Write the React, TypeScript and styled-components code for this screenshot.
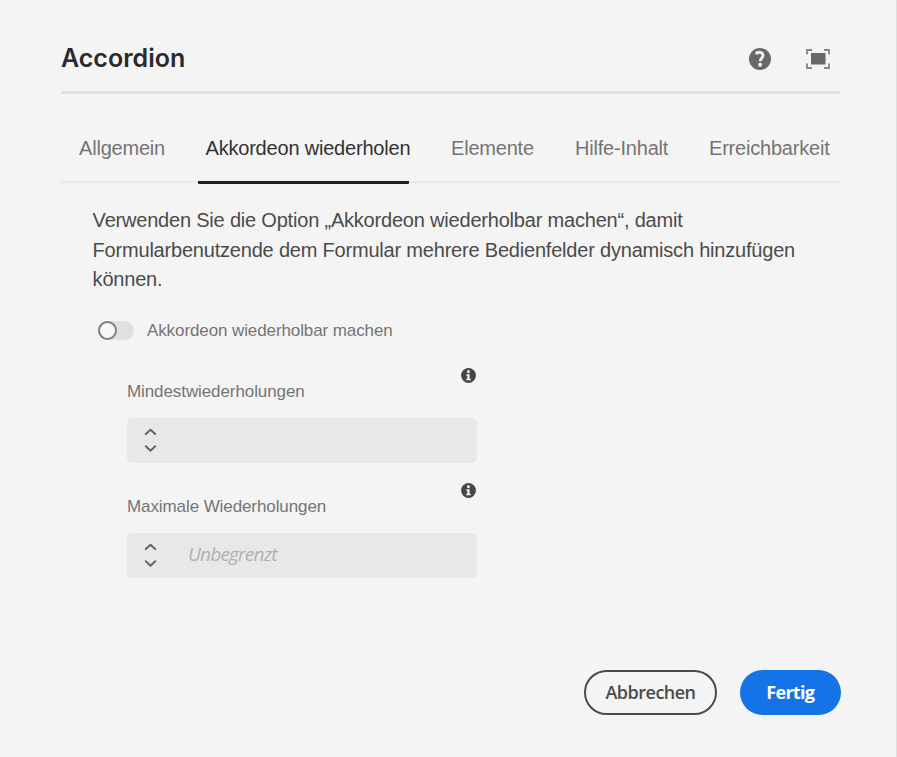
import React from 'react';
import styled, { createGlobalStyle } from 'styled-components';

const GlobalStyle = createGlobalStyle`
  * { box-sizing: border-box; }
  body { margin: 0; background: #f4f4f4; }
  button { margin: 0; padding: 0; background: none; border: 0; cursor: pointer; }
`;

const Dialog = styled.main`
  display: flex;
  flex-direction: column;
  width: 897px;
  height: 757px;
  padding: 31px 56px 42px 61px;
  border-right: 1px solid #dfdfdf;
  background: #f4f4f4;
  color: #4b4b4b;
  font-family: 'Liberation Sans', Arial, sans-serif;
  overflow: hidden;
`;

const Header = styled.header`
  display: flex;
  align-items: center;
  justify-content: space-between;
  height: 63px;
  padding: 0 10.5px 7px 0;
  border-bottom: 3px solid #e0e0e0;
`;

const Title = styled.h1`
  margin: 0;
  color: #2a2a2a;
  font: 600 25px/32px Inter, sans-serif;
`;

const HeaderActions = styled.div`
  display: flex;
  align-items: center;
  gap: 34.5px;
  padding-top: 2px;
`;

const IconButton = styled.button`
  display: flex;
  color: #686868;
`;

const TabList = styled.nav`
  display: flex;
  height: 89px;
  border-bottom: 2px solid #e8e8e8;
`;

const TabGroup = styled.div`
  display: flex;
  margin-left: 24px;
`;

const Tab = styled.button<{ $active?: boolean; $width: number }>`
  flex: none;
  width: ${p => p.$width}px;
  height: 90px;
  padding: 20px 0 0 ${p => (p.$active ? 7.5 : 18)}px;
  border-bottom: 3px solid ${p => (p.$active ? '#1f1f1f' : 'transparent')};
  border-radius: 1px;
  color: ${p => (p.$active ? '#323232' : '#747474')};
  font: 20px/24px 'Liberation Sans', Arial, sans-serif;
  letter-spacing: -0.2px;
  text-align: left;
  white-space: nowrap;
`;

const Content = styled.section`
  padding: 23px 0 0 31.6px;
`;

const Description = styled.p`
  margin: 0;
  font-size: 20px;
  line-height: 29.7px;
  letter-spacing: -0.2px;
  white-space: nowrap;
`;

const SwitchRow = styled.label`
  display: flex;
  align-items: center;
  gap: 13px;
  height: 24px;
  margin: 23px 0 0 5.4px;
  color: #747474;
  font-size: 17px;
  letter-spacing: -0.1px;
`;

const SwitchText = styled.span`
  padding-top: 1px;
`;

const SwitchTrack = styled.span`
  display: flex;
  width: 36px;
  height: 19px;
  border-radius: 10px;
  background: #e0e0e0;
`;

const SwitchKnob = styled.span`
  width: 19px;
  height: 19px;
  border: 2px solid #808080;
  border-radius: 50%;
  background: #f7f7f7;
`;

const Fields = styled.div`
  display: grid;
  gap: 13px;
  width: 350px;
  margin: 25px 0 0 34.4px;
`;

const Field = styled.div`
  display: grid;
  grid-template-columns: 1fr 15.5px;
  grid-template-rows: 51px 44.5px;
  height: 102px;

  & > svg {
    margin-top: 1px;
  }
`;

const FieldLabel = styled.label`
  padding-top: 15.2px;
  color: #747474;
  font-size: 17px;
  line-height: 20px;
  letter-spacing: -0.09px;
`;

const NumberBox = styled.div`
  display: flex;
  align-items: center;
  grid-column: 1 / -1;
  gap: 31px;
  padding-left: 17px;
  border-radius: 5px;
  background: #e8e8e8;
`;

const Placeholder = styled.span`
  margin-top: -3px;
  color: #b0b0b0;
  font: italic 19px/24px 'Open Sans', sans-serif;
  letter-spacing: -0.8px;
`;

const Footer = styled.footer`
  display: flex;
  justify-content: flex-end;
  gap: 23px;
  margin: auto -0.5px 0 0;
`;

const ActionButton = styled.button<{ $primary?: boolean }>`
  width: ${p => (p.$primary ? 100.5 : 133)}px;
  height: 45px;
  padding-bottom: 1px;
  border: ${p => (p.$primary ? '0' : '2px solid #4b4b4b')};
  border-radius: 23px;
  background: ${p => (p.$primary ? '#1473e6' : 'transparent')};
  color: ${p => (p.$primary ? '#fff' : '#4b4b4b')};
  font: ${p => (p.$primary ? 700 : 600)} 18px/24px 'Open Sans', sans-serif;
  letter-spacing: ${p => (p.$primary ? -0.7 : -0.5)}px;
`;

const HelpIcon = () => (
  <svg width="22" height="22" viewBox="0 0 22 22">
    <circle cx="11" cy="11" r="11" fill="currentColor" />
    <path d="M7.8 6.6V4.9C10.5 3.5 14 4.5 14 7.3c0 2.7-2.8 3-2.8 6" fill="none" stroke="#f4f4f4" strokeWidth="2.9" />
    <circle cx="11.1" cy="16.8" r="2" fill="#f4f4f4" />
  </svg>
);

const FullscreenIcon = () => (
  <svg width="24" height="20" viewBox="0 0 24 20">
    <rect x="5" y="4" width="14.5" height="11.5" fill="currentColor" />
    <path d="M1 5.5V1h5M18 1h5v4.5M23 14.5V19h-5M6 19H1v-4.5" fill="none" stroke="#858585" strokeWidth="1.8" />
  </svg>
);

const InfoIcon = () => (
  <svg width="15" height="15" viewBox="0 0 15 15">
    <circle cx="7.5" cy="7.5" r="7.4" fill="#464646" />
    <circle cx="7.4" cy="3.7" r="1.45" fill="#f4f4f4" />
    <path d="M5.3 6.2h3.3v4.5h1.2v1.5H5.2v-1.5h1.2v-3H5.3z" fill="#f4f4f4" />
  </svg>
);

const Stepper = () => (
  <svg width="13" height="25" viewBox="0 0 13 25" fill="none" stroke="#666" strokeWidth="2" strokeLinecap="round" strokeLinejoin="round">
    <path d="M1.8 6.1 6.5 1.7l4.7 4.4M1.8 18.3l4.7 4.4 4.7-4.4" />
  </svg>
);

const NumberField = ({ label, placeholder }: { label: string; placeholder?: string }) => (
  <Field>
    <FieldLabel>{label}</FieldLabel>
    <InfoIcon />
    <NumberBox>
      <Stepper />
      {placeholder && <Placeholder>{placeholder}</Placeholder>}
    </NumberBox>
  </Field>
);

export default function App() {
  return (
    <>
      <GlobalStyle />
      <Dialog>
        <Header>
          <Title>Accordion</Title>
          <HeaderActions>
            <IconButton aria-label="Hilfe"><HelpIcon /></IconButton>
            <IconButton aria-label="Vollbild"><FullscreenIcon /></IconButton>
          </HeaderActions>
        </Header>
        <TabList>
          <Tab $width={137}>Allgemein</Tab>
          <Tab $active $width={211}>Akkordeon wiederholen</Tab>
          <TabGroup>
            <Tab $width={124}>Elemente</Tab>
            <Tab $width={134}>Hilfe-Inhalt</Tab>
            <Tab $width={140}>Erreichbarkeit</Tab>
          </TabGroup>
        </TabList>
        <Content>
          <Description>
            Verwenden Sie die Option „Akkordeon wiederholbar machen“, damit<br />
            Formularbenutzende dem Formular mehrere Bedienfelder dynamisch hinzufügen<br />
            können.
          </Description>
          <SwitchRow>
            <SwitchTrack><SwitchKnob /></SwitchTrack>
            <SwitchText>Akkordeon wiederholbar machen</SwitchText>
          </SwitchRow>
          <Fields>
            <NumberField label="Mindestwiederholungen" />
            <NumberField label="Maximale Wiederholungen" placeholder="Unbegrenzt" />
          </Fields>
        </Content>
        <Footer>
          <ActionButton>Abbrechen</ActionButton>
          <ActionButton $primary>Fertig</ActionButton>
        </Footer>
      </Dialog>
    </>
  );
}
